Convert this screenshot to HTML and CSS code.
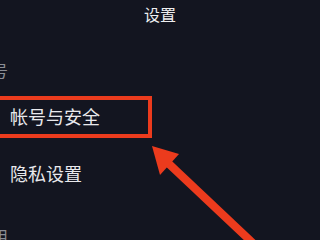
FILE: index.html
```html
<!DOCTYPE html>
<html>
<head>
    <meta charset="utf-8" />
    <title>设置</title>
    <link rel="stylesheet" href="styles.css">
</head>
<body>
    <div id="Screen">
        <div class="title-bar">设置</div>

        <div class="section-label first">账号</div>
        <div class="row">帐号与安全</div>
        <div class="row">隐私设置</div>

        <div class="section-label">通用</div>

        <div class="mark-box"></div>
        <svg class="mark-arrow" width="320" height="240" viewBox="0 0 320 240">
            <line x1="168" y1="163" x2="256" y2="246" stroke="#ec3b1d" stroke-width="8" />
            <polygon points="152,146 160,175 179,154" fill="#ec3b1d" />
        </svg>
    </div>
</body>
</html>
```

FILE: styles.css
```css
body {
    margin: 0;
    background: #131520;
}

#Screen {
    position: relative;
    width: 320px;
    height: 240px;
    overflow: hidden;
    background: #131520;
    font-family: "Noto Sans CJK SC", "Noto Sans", sans-serif;
}

.title-bar {
    height: 28px;
    line-height: 28px;
    text-align: center;
    font-size: 16px;
    color: #eeeef0;
}

.section-label {
    margin-left: -24px;
    margin-top: 22px;
    height: 24px;
    line-height: 24px;
    font-size: 16px;
    color: #8b8d95;
}

.section-label.first {
    margin-top: 30px;
    margin-bottom: 6px;
}

.row {
    height: 57px;
    line-height: 57px;
    padding-left: 10px;
    font-size: 18px;
    color: #e9e9ec;
}

.mark-box {
    position: absolute;
    left: -10px;
    top: 96px;
    width: 162px;
    height: 42px;
    box-sizing: border-box;
    border: 4px solid #ec3b1d;
}

.mark-arrow {
    position: absolute;
    left: 0;
    top: 0;
}
```
